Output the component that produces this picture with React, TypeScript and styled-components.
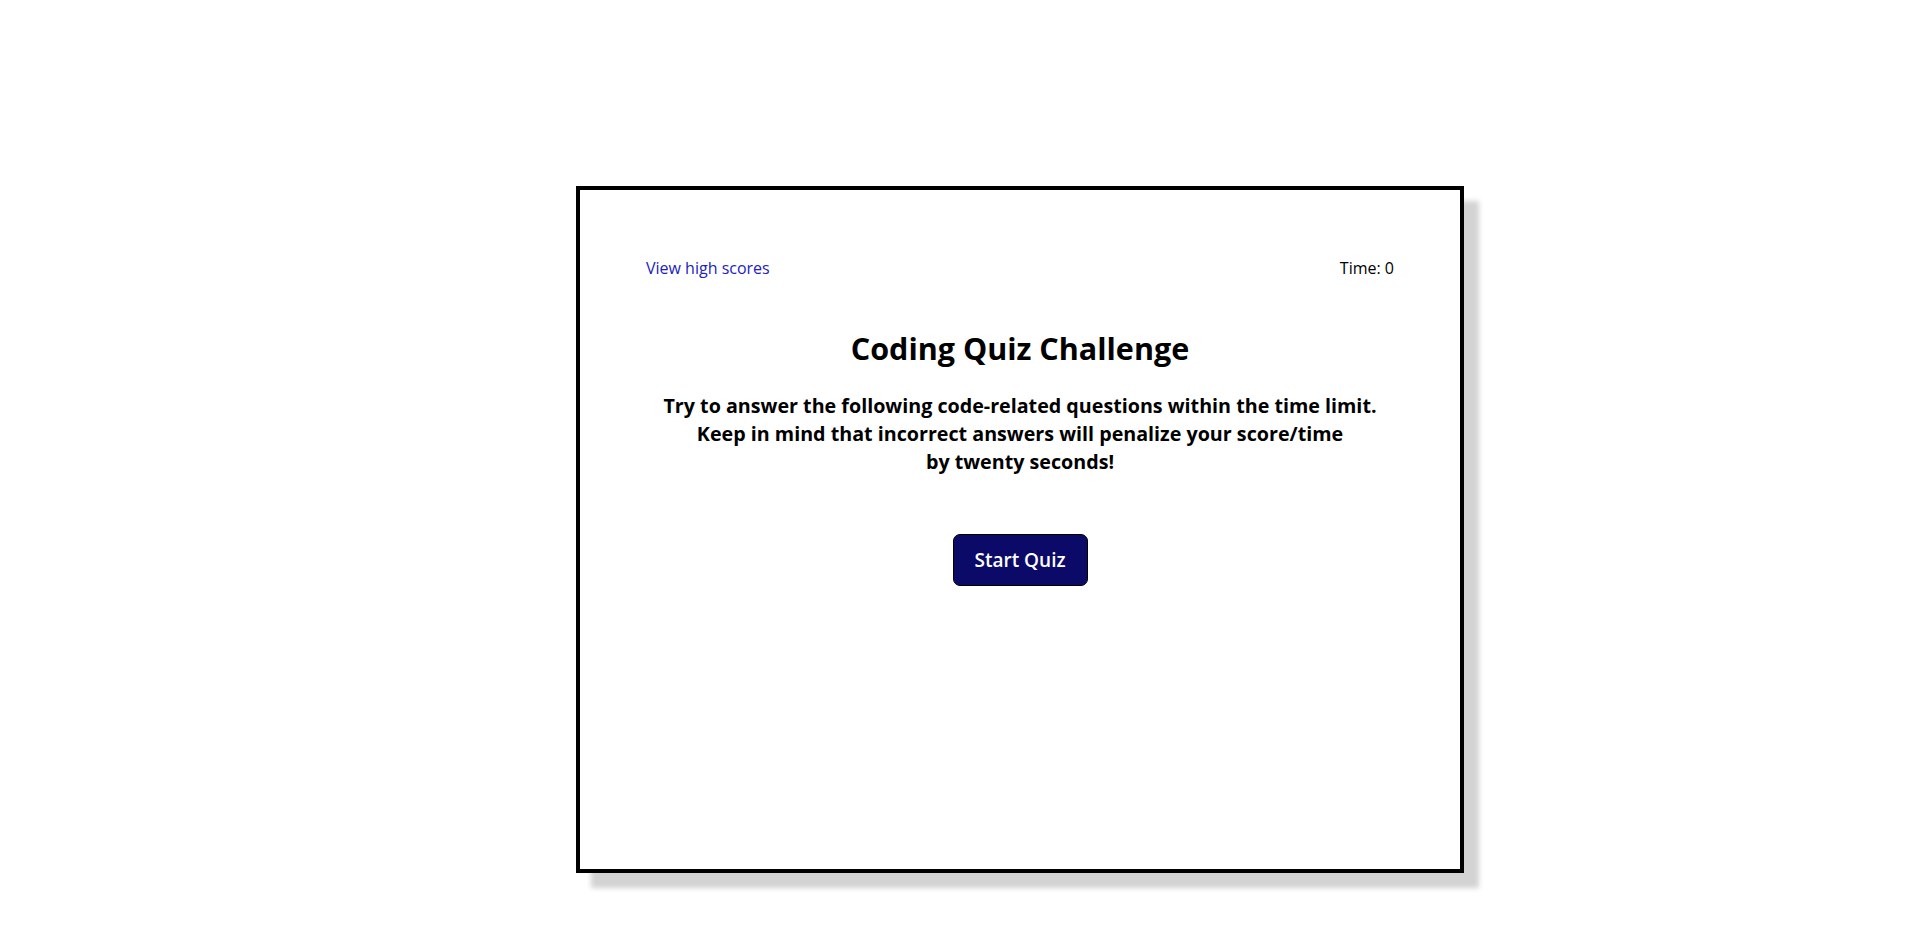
import React from "react";
import styled, { createGlobalStyle } from "styled-components";

const Global = createGlobalStyle`
  html, body { margin: 0; padding: 0; background: #ffffff; }
  body { font-family: "Comic Sans MS", "Open Sans", "DejaVu Sans", sans-serif; color: #000; }
`;

const Page = styled.main`
  padding: 186px 0 40px 576px;
`;

const Card = styled.section`
  box-sizing: border-box;
  width: 888px;
  height: 687px;
  border: 4px solid #000;
  background: #fff;
  box-shadow: 15px 15px 5px #d3d3d3;
  display: flex;
  flex-direction: column;
  align-items: center;
`;

const Header = styled.header`
  align-self: stretch;
  display: flex;
  justify-content: space-between;
  align-items: center;
  padding: 0 66px;
  margin-top: 67px;
  font-size: 16px;
  line-height: 22px;
`;

const HighScores = styled.a`
  color: #2121c4;
  text-decoration: none;
  cursor: pointer;
`;

const Timer = styled.span`
  color: #000;
`;

const Title = styled.h1`
  margin: 49px 0 0;
  font-size: 30.5px;
  line-height: 40px;
  font-weight: 700;
`;

const Intro = styled.p`
  margin: 24px 0 0;
  font-size: 19.7px;
  line-height: 28px;
  font-weight: 700;
  text-align: center;
`;

const StartButton = styled.button`
  margin-top: 58px;
  box-sizing: border-box;
  width: 135px;
  height: 52px;
  border: 1px solid #000;
  border-radius: 7px;
  background: #0b0a68;
  color: #fff;
  font-family: inherit;
  font-size: 19px;
  font-weight: 600;
  cursor: pointer;
`;

export default function App() {
  return (
    <>
      <Global />
      <Page>
        <Card>
          <Header>
            <HighScores>View high scores</HighScores>
            <Timer>Time: 0</Timer>
          </Header>
          <Title>Coding Quiz Challenge</Title>
          <Intro>
            Try to answer the following code-related questions within the time limit.
            <br />
            Keep in mind that incorrect answers will penalize your score/time
            <br />
            by twenty seconds!
          </Intro>
          <StartButton>Start Quiz</StartButton>
        </Card>
      </Page>
    </>
  );
}
